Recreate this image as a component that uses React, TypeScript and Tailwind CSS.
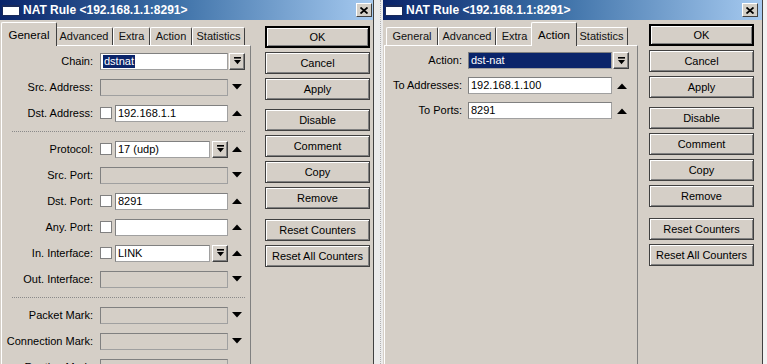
import React from "react";

const BG = "bg-[#d5cfc7]";

function DDIcon() {
  return (
    <svg width="9" height="8" viewBox="0 0 9 8">
      <rect x="1" y="0" width="7" height="1.6" fill="#000" />
      <path d="M1 3 H8 L4.5 7.2 Z" fill="#000" />
    </svg>
  );
}

function Tri({ up }: { up: boolean }) {
  return (
    <svg width="10" height="6" viewBox="0 0 10 6">
      {up ? <path d="M0 6 H10 L5 0.5 Z" fill="#000" /> : <path d="M0 0 H10 L5 5.5 Z" fill="#000" />}
    </svg>
  );
}

function DDButton() {
  return (
    <div className={`w-[16px] h-[17px] ${BG} border border-t-white border-l-white border-b-[#404040] border-r-[#404040] flex items-center justify-center shadow-[inset_-1px_-1px_0_#808080]`}>
      <DDIcon />
    </div>
  );
}

function TitleBar({ closeMr }: { closeMr: string }) {
  return (
    <div className="h-[20px] flex items-center bg-[linear-gradient(to_right,#0a246a_0%,#3a6ea5_45%,#a6caf0_100%)] shrink-0">
      <div className="ml-[2px] w-[18px] h-[11px] bg-white border border-[#1a2a5a] border-t-[2px]" />
      <span className="ml-[3px] text-white font-bold text-[12px] leading-none">NAT Rule &lt;192.168.1.1:8291&gt;</span>
      <div className={`ml-auto ${closeMr} w-[16px] h-[14px] bg-[#d4d0c8] border border-t-white border-l-white border-b-[#404040] border-r-[#404040] flex items-center justify-center`}>
        <svg width="8" height="7" viewBox="0 0 8 7">
          <path d="M0.5 0.5 L7.5 6.5 M7.5 0.5 L0.5 6.5" stroke="#000" strokeWidth="1.8" />
        </svg>
      </div>
    </div>
  );
}

type Tab = { name: string; w: string; aw: string };
const TABS: Tab[] = [
  { name: "General", w: "w-[52px]", aw: "w-[56px]" },
  { name: "Advanced", w: "w-[58px]", aw: "w-[62px]" },
  { name: "Extra", w: "w-[37px]", aw: "w-[41px]" },
  { name: "Action", w: "w-[42px]", aw: "w-[46px]" },
  { name: "Statistics", w: "w-[53px]", aw: "w-[57px]" },
];

function Tabs({ active }: { active: number }) {
  return (
    <div className="flex h-[25px] items-end pl-[2px] shrink-0">
      {TABS.map((t, i) =>
        i === active ? (
          <div
            key={t.name}
            className={`${t.aw} -mx-[2px] h-[24px] -mb-[1px] relative z-10 ${BG} border-t border-l border-r border-t-white border-l-white border-r-[#404040] rounded-t-[2px] flex items-start justify-center pt-[4px] text-[11.5px]`}
          >
            {t.name}
          </div>
        ) : (
          <div
            key={t.name}
            className={`${t.w} h-[18px] border-t border-l border-r border-t-white border-l-white border-r-[#404040] rounded-t-[2px] flex items-center justify-center text-[11px] text-[#111]`}
          >
            {t.name}
          </div>
        )
      )}
    </div>
  );
}

type RowP = {
  label: string;
  labelW: string;
  gap: string;
  fieldW: string;
  rowH: string;
  check?: boolean;
  value?: string;
  disabled?: boolean;
  innerDD?: boolean;
  outer?: "up" | "down" | "dd";
  sel?: "text" | "full";
  outerW: string;
};

function Row(p: RowP) {
  const boxBase = "h-[17px] border border-t-[#808080] border-l-[#808080] border-b-[#a0a0a0] border-r-[#a0a0a0] flex items-center text-[11px] overflow-hidden whitespace-nowrap";
  return (
    <div className={`flex items-center ${p.rowH}`}>
      <div className={`${p.labelW} text-right text-[11px] whitespace-nowrap`}>{p.label}</div>
      <div className={`${p.gap} ${p.fieldW} flex items-center`}>
        {p.check && <div className="w-[12px] h-[12px] bg-white border border-[#808080] mr-[3px] shrink-0" />}
        {p.disabled ? (
          <div className={`${boxBase} flex-1`} />
        ) : (
          <div className={`${boxBase} flex-1 ${p.sel === "full" ? "bg-[#0a246a] text-white" : "bg-white"} pl-[2px]`}>
            {p.sel === "text" ? <span className="bg-[#0a246a] text-white px-[1px] leading-[13px]">{p.value}</span> : <span>{p.value}</span>}
          </div>
        )}
        {p.innerDD && (
          <div className="ml-[2px]">
            <DDButton />
          </div>
        )}
      </div>
      <div className={`${p.outerW} flex items-center justify-center`}>
        {p.outer === "dd" ? (
          <div className="ml-[1px] mr-auto">
            <DDButton />
          </div>
        ) : p.outer === "up" ? (
          <Tri up />
        ) : p.outer === "down" ? (
          <Tri up={false} />
        ) : null}
      </div>
    </div>
  );
}

function Sep() {
  return (
    <div className="h-[10px] flex items-center">
      <div className="ml-[10px] w-[233px] border-t border-dotted border-[#8a8a8a]" />
    </div>
  );
}

function Btn({ children, def }: { children: React.ReactNode; def?: boolean }) {
  return (
    <div
      className={`h-[22px] w-[105px] flex items-center justify-center text-[11px] ${
        def ? "border-2 border-[#000] shadow-[inset_1px_1px_0_#fff,inset_-1px_-1px_0_#808080]" : "border border-[#404040] shadow-[inset_1px_1px_0_#fff,inset_-1px_-1px_0_#808080]"
      }`}
    >
      {children}
    </div>
  );
}

function Buttons({ cls, gap2 }: { cls: string; gap2: string }) {
  return (
    <div className={`flex flex-col ${cls}`}>
      <div className="flex flex-col gap-[4px]">
        <Btn def>OK</Btn>
        <Btn>Cancel</Btn>
        <Btn>Apply</Btn>
      </div>
      <div className="flex flex-col gap-[4px] mt-[9px]">
        <Btn>Disable</Btn>
        <Btn>Comment</Btn>
        <Btn>Copy</Btn>
        <Btn>Remove</Btn>
      </div>
      <div className={`flex flex-col gap-[4px] ${gap2}`}>
        <Btn>Reset Counters</Btn>
        <Btn>Reset All Counters</Btn>
      </div>
    </div>
  );
}

const L = { labelW: "w-[91px]", gap: "ml-[7px]", fieldW: "w-[128px]", rowH: "h-[26px]", outerW: "w-[18px]" };
const R = { labelW: "w-[77px]", gap: "ml-[6px]", fieldW: "w-[144px]", rowH: "h-[25px]", outerW: "w-[20px]" };

export default function App() {
  return (
    <div className="w-[767px] h-[364px] overflow-hidden flex bg-white font-['Liberation_Sans',Arial,sans-serif] text-black">
      {/* Left window */}
      <div className={`w-[374px] h-full flex flex-col ${BG} border-r border-[#404040]`}>
        <TitleBar closeMr="mr-[1px]" />
        <div className="flex flex-1 min-h-0">
          <div className="w-[250px] ml-[1px] flex flex-col">
            <Tabs active={0} />
            <div className="flex-1 pt-[2px] border-t border-l border-white border-r border-r-[#808080]">
              <Row {...L} label="Chain:" value="dstnat" sel="text" outer="dd" />
              <Row {...L} label="Src. Address:" disabled outer="down" />
              <Row {...L} label="Dst. Address:" check value="192.168.1.1" outer="up" />
              <Sep />
              <Row {...L} label="Protocol:" check value="17 (udp)" innerDD outer="up" />
              <Row {...L} label="Src. Port:" disabled outer="down" />
              <Row {...L} label="Dst. Port:" check value="8291" outer="up" />
              <Row {...L} label="Any. Port:" check value="" outer="up" />
              <Row {...L} label="In. Interface:" check value="LINK" innerDD outer="up" />
              <Row {...L} label="Out. Interface:" disabled outer="down" />
              <Sep />
              <Row {...L} label="Packet Mark:" disabled outer="down" />
              <Row {...L} label="Connection Mark:" disabled outer="down" />
              <Row {...L} label="Routing Mark:" disabled outer="down" />
            </div>
          </div>
          <Buttons cls="ml-[14px] pt-[6px]" gap2="mt-[10px]" />
        </div>
      </div>

      {/* gap */}
      <div className="w-[9px] h-full bg-[#ebebeb] flex justify-end pr-[2px]">
        <div className="h-full border-r border-dotted border-[#b0b0b0]" />
      </div>

      {/* Right window */}
      <div className={`w-[380px] h-full flex flex-col ${BG} border-r border-[#404040]`}>
        <TitleBar closeMr="mr-[4px]" />
        <div className="flex flex-1 min-h-0">
          <div className="w-[254px] ml-[1px] flex flex-col">
            <Tabs active={3} />
            <div className="flex-1 pt-[2px] border-t border-l border-white border-r border-r-[#808080]">
              <Row {...R} label="Action:" value="dst-nat" sel="full" outer="dd" />
              <Row {...R} label="To Addresses:" value="192.168.1.100" outer="up" />
              <Row {...R} label="To Ports:" value="8291" outer="up" />
            </div>
          </div>
          <Buttons cls="ml-[11px] pt-[4px]" gap2="mt-[11px]" />
        </div>
      </div>

      <div className="flex-1 h-full bg-[#f2f2f2]" />
    </div>
  );
}
